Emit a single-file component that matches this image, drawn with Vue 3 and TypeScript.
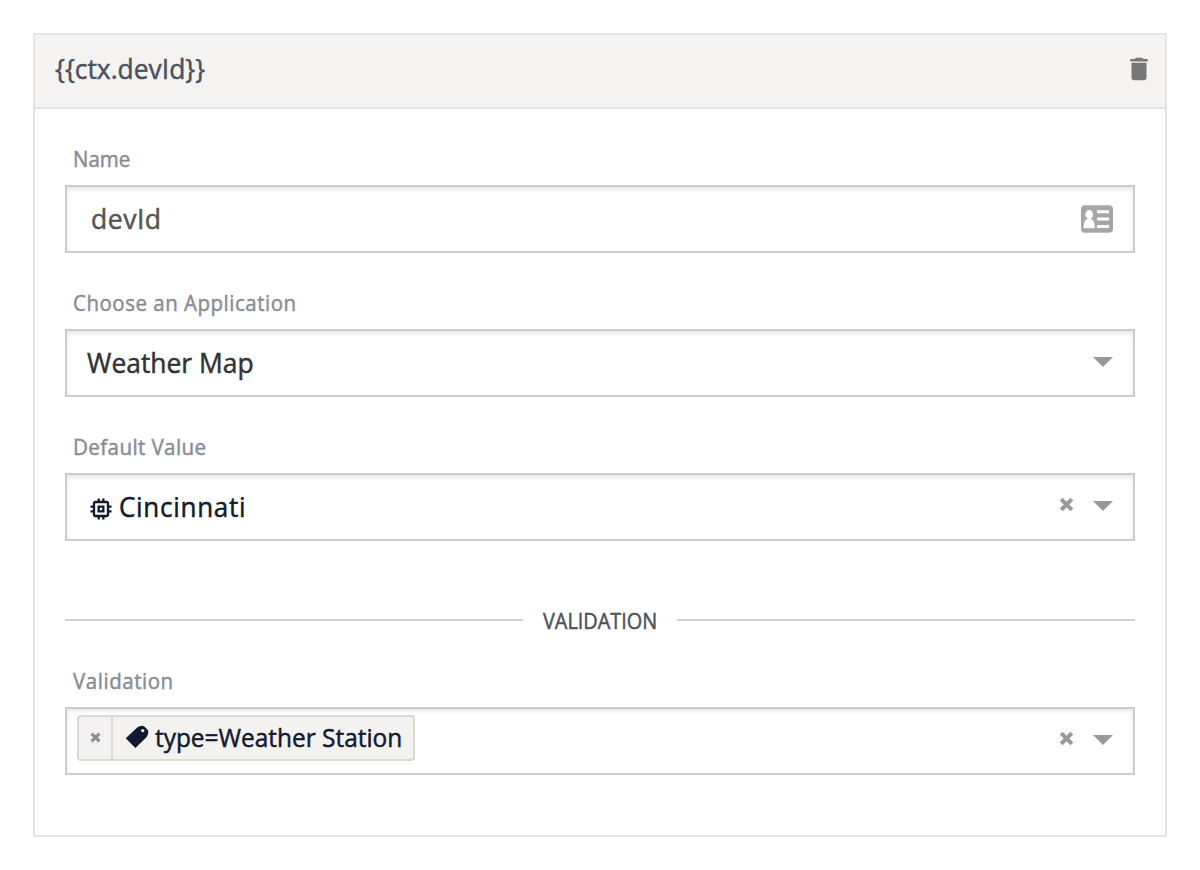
<script setup lang="ts">
interface Field {
  label: string
  value: string
  kind: 'text' | 'select' | 'device'
}

const fields: Field[] = [
  { label: 'Name', value: 'devId', kind: 'text' },
  { label: 'Choose an Application', value: 'Weather Map', kind: 'select' },
  { label: 'Default Value', value: 'Cincinnati', kind: 'device' },
]
const title = '{{ctx.devId}}'
</script>

<template>
  <main class="page">
    <section class="card">
      <header class="card-header">
        <h1 class="title">{{ title }}</h1>
        <svg class="trash" viewBox="0 0 24 24"><path d="M6 19c0 1.100.9 2 2 2h8c1.100 0 2-.9 2-2V7H6v12zM19 4h-3.500l-1-1h-5l-1 1H5v2h14V4z" /></svg>
      </header>
      <div class="card-body">
        <div v-for="f in fields" :key="f.label" class="field">
          <div class="label"><span :class="'label-' + f.kind">{{ f.label }}</span></div>
          <div class="control" :class="'control-' + f.kind">
            <svg v-if="f.kind === 'device'" class="chip" viewBox="0 0 24 24"><path d="M15 9H9v6h6V9zm-2 4h-2v-2h2v2zm8-2V9h-2V7c0-1.100-.9-2-2-2h-2V3h-2v2h-2V3H9v2H7c-1.100 0-2 .9-2 2v2H3v2h2v2H3v2h2v2c0 1.100.9 2 2 2h2v2h2v-2h2v2h2v-2h2c1.100 0 2-.9 2-2v-2h2v-2h-2v-2h2zm-4 6H7V7h10v10z" /></svg>
            <span class="value">{{ f.value }}</span>
            <svg v-if="f.kind === 'text'" class="contact" viewBox="0 0 32 28">
              <rect y=".3" width="32" height="27.500" rx="4" fill="#a6a6a6" />
              <g fill="#fff">
                <ellipse cx="8.200" cy="9.600" rx="3.900" ry="4.500" />
                <path d="M2.600 23.300c0-5 1-8.300 3.700-9.300h3.800c2.700 1 3.700 4.300 3.700 9.300z" />
                <path d="M16 5.300h12v3H16zM16 12.500h12v3H16zM16 19.900h12v3H16z" />
              </g>
            </svg>
            <svg v-if="f.kind === 'device'" class="clear" viewBox="0 0 14 14"><path d="M2 2l10 10M12 2L2 12" /></svg>
            <i v-if="f.kind !== 'text'" class="arrow"></i>
          </div>
        </div>

        <div class="divider"><div class="divider-title"><span>VALIDATION</span></div></div>

        <div class="field">
          <div class="label"><span class="label-validation">Validation</span></div>
          <div class="control control-tags">
            <div class="tag">
              <span class="tag-remove"><svg viewBox="0 0 14 14"><path d="M2 2l10 10M12 2L2 12" /></svg></span>
              <span class="tag-body">
                <svg class="tag-icon" viewBox="0 0 24 24"><path fill-rule="evenodd" d="M.7 13.200L12 2.700C13.200 1.600 14.500 1.200 16 .9c1.700-.3 2.600-.2 3.600.8l2.700 2.700c1 1 1.200 1.900.9 3.600-.4 2.200-.9 3.300-2 4.400L10.400 23zM17.700 3.900a1.700 1.700 0 1 0 0 3.400 1.700 1.700 0 0 0 0-3.400z" /></svg>
                <span class="tag-text">type=Weather Station</span>
              </span>
            </div>
            <svg class="clear" viewBox="0 0 14 14"><path d="M2 2l10 10M12 2L2 12" /></svg>
            <i class="arrow"></i>
          </div>
        </div>
      </div>
    </section>
  </main>
</template>

<style>
body { margin: 0; background: #fff; }
</style>

<style scoped>
* { box-sizing: border-box; }
.page {
  height: 870px;
  padding: 33px;
  font-family: "Open Sans", "Noto Sans", sans-serif;
  font-weight: 500;
  -webkit-text-stroke: 0.5px currentColor;
  white-space: nowrap;
}
.card { height: 804px; border: 2px solid #e3e4e6; background: #fff; }
.card-header {
  height: 74px;
  padding: 0 11px 6px 20px;
  display: flex;
  align-items: center;
  justify-content: space-between;
  background: #f4f3f1;
  border-bottom: 2px solid #e3e4e6;
}
.title, .label span, .value, .divider-title span, .tag-text { display: inline-block; transform-origin: left center; }
.title { margin: 0; font-size: 28px; line-height: 38px; font-weight: 500; color: #4d515b; transform: scaleX(0.943); }
.trash { width: 30px; height: 30px; margin-top: 2px; fill: #777; }
.card-body { padding: 32px 30px 0; }
.field + .field { margin-top: 32px; }
.label {
  height: 44px;
  padding: 2px 0 0 8px;
  font-size: 22px;
  line-height: 30px;
  color: #888d95;
}
.label .label-text { transform: scaleX(0.93); }
.label .label-select { letter-spacing: 0.56px; transform: scaleX(0.93); }
.label .label-device { letter-spacing: 0.42px; transform: scaleX(0.935); }
.label .label-validation { letter-spacing: 0.6px; transform: scaleX(0.93); }
.control {
  height: 68px;
  padding: 0 20px;
  display: flex;
  align-items: center;
  border: 2px solid #ccc;
  box-shadow: inset 0 2px 4px rgba(0, 0, 0, 0.1);
  font-size: 28px;
  line-height: 38px;
}
.value { margin-right: auto; padding-bottom: 2px; }
.control-text { padding-left: 24px; color: #555; }
.control-text .value { letter-spacing: 0.5px; transform: scaleX(0.95); }
.control-select { color: #333; }
.control-select .value { transform: scaleX(0.943); }
.control-device { color: #111a2f; }
.control-device .value { letter-spacing: 0.75px; transform: scaleX(0.93); }
.contact { width: 32px; height: 28px; }
.chip { width: 28px; height: 28px; margin: 4px 4px 0 0; fill: currentColor; }
.clear { width: 15px; height: 15px; margin: 0 19.5px 6px auto; fill: none; stroke: #999; stroke-width: 3.8; }
.arrow { border: 10px solid transparent; border-top-color: #999; border-bottom: 0; margin: 0 0 2px auto; }
.clear + .arrow { margin-left: 0; }
.divider {
  display: flex;
  align-items: center;
  gap: 20px;
  height: 30px;
  margin: 64px 0 28px;
  font-size: 22px;
  line-height: 30px;
  color: #4d515b;
}
.divider-title { width: 114px; }
.divider-title span { transform: scaleX(0.903); }
.divider::before, .divider::after { content: ""; flex: 1; height: 2px; background: #d2d2d3; }
.control-tags { padding-left: 10px; }
.tag {
  display: flex;
  width: 338px;
  height: 46px;
  margin-bottom: 6px;
  border: 2px solid #dcd9d3;
  border-radius: 4px;
  background: #f4f2f1;
  color: #111a2f;
}
.tag-remove { flex: none; width: 34px; display: flex; align-items: center; justify-content: center; border-right: 2px solid #dcd9d3; }
.tag-remove svg { width: 11px; height: 11px; margin-left: 1px; margin-bottom: 1px; fill: none; stroke: #8b9097; stroke-width: 4; }
.tag-body { display: flex; align-items: center; padding-left: 12px; font-size: 26px; }
.tag-icon { flex: none; width: 24px; height: 24px; margin: 0 6px 2px 0; fill: currentColor; }
.tag-text { padding-bottom: 2px; transform: scaleX(0.939); }
</style>
